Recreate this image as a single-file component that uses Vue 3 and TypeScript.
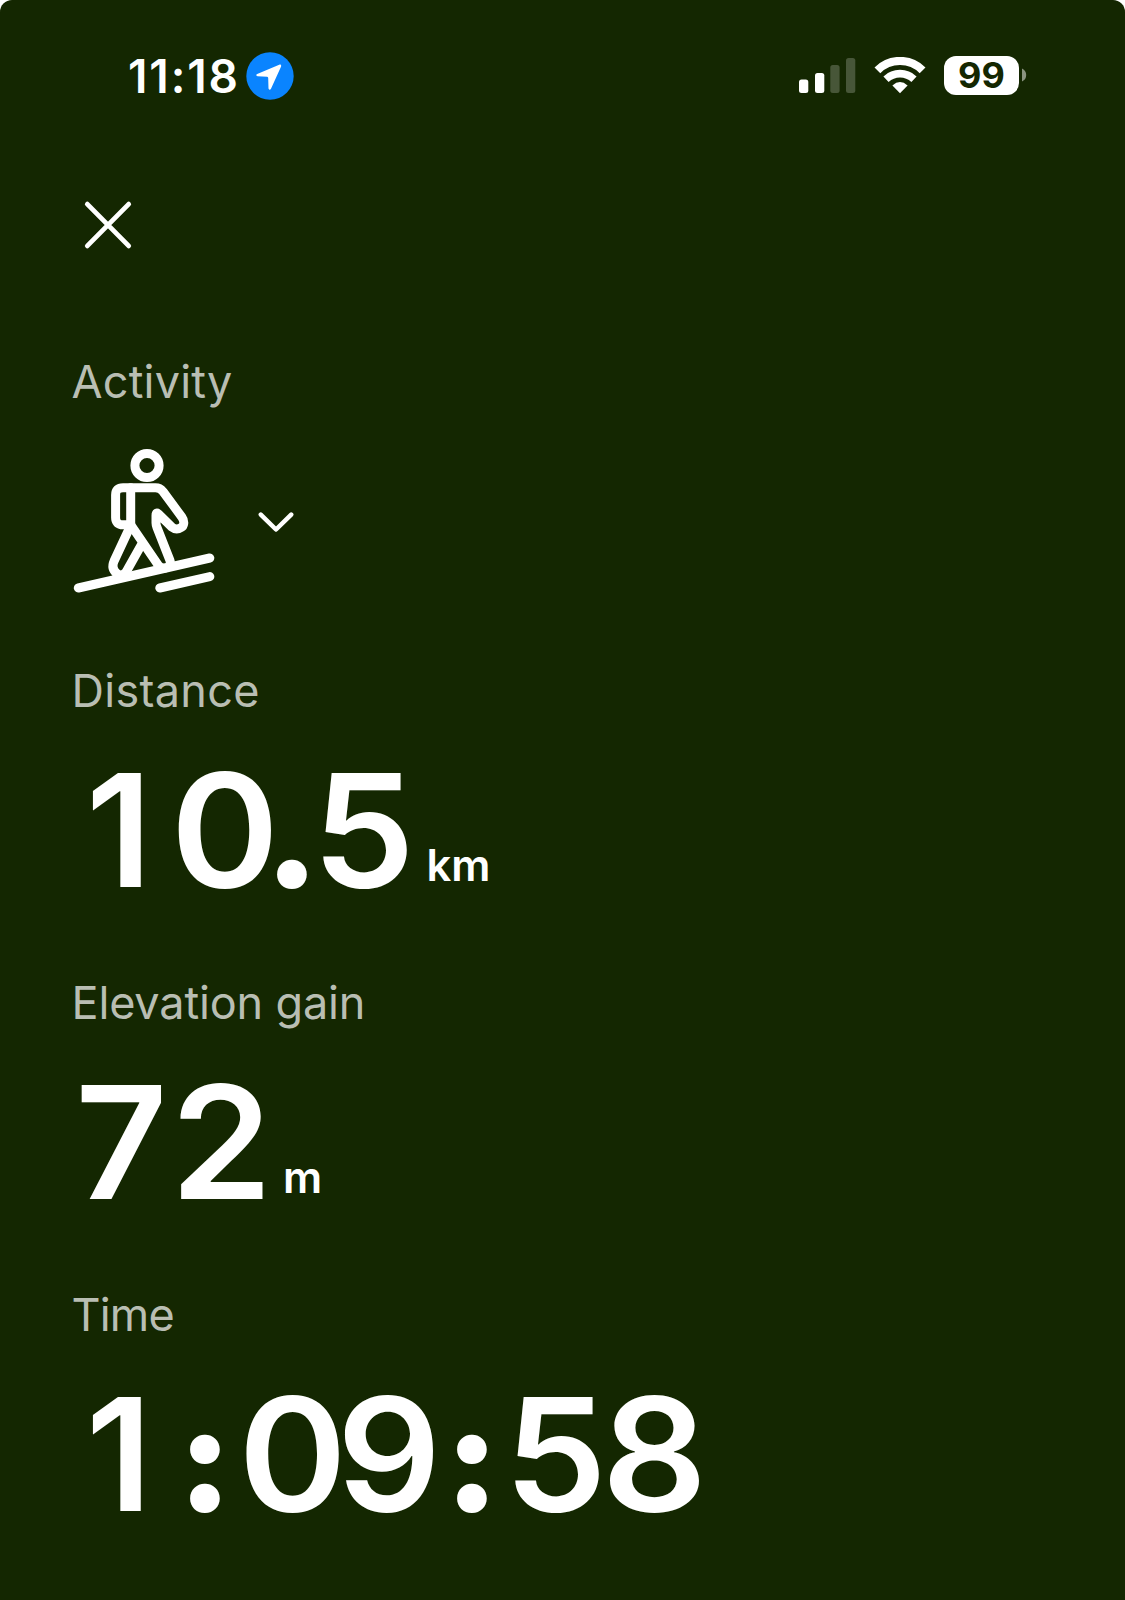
<script setup lang="ts">
interface Glyph {
  ch: string
  width: number
  stretch: number
}
interface Metric {
  key: string
  label: string
  spacing: number
  glyphs: Glyph[]
  unit?: string
}

const g = (ch: string, width: number, stretch = 1): Glyph => ({ ch, width, stretch })

const isMark = (ch: string): boolean => ch === '.' || ch === ':'

const metrics: Metric[] = [
  { key: 'distance', label: 'Distance', spacing: 0.3, unit: 'km', glyphs: [g('1', 92), g('0', 120, 1.05), g('.', 14), g('5', 129, 1.04)] },
  { key: 'elevation', label: 'Elevation gain', spacing: -0.15, unit: 'm', glyphs: [g('7', 97, 1.02), g('2', 103, 1.04)] },
  {
    key: 'time', label: 'Time', spacing: -0.8,
    glyphs: [g('1', 92), g(':', 80), g('0', 95, 1.05), g('9', 98, 1.04), g(':', 68), g('5', 99, 1.04), g('8', 99, 1.05)],
  },
]
</script>

<template>
  <main class="screen">
    <header class="status">
      <div class="clock">
        <span class="time">11:18</span>
        <svg class="location" width="48" height="48" viewBox="0 0 48 48">
          <circle cx="24" cy="24" r="23.7" fill="#0a84ff" />
          <path d="M33.8 12.6 11.2 22.1Q9.2 23.3 11.5 24.2L21.2 24.8Q22.2 25 22.2 26L22.5 36.6Q23.6 39 25 36.8L35.1 14.6Q35.6 12.1 33.8 12.6Z" fill="#fff" />
        </svg>
      </div>
      <div class="indicators">
        <svg width="58" height="36" viewBox="0 0 58 36" fill="#fff">
          <rect x="0" y="21.5" width="9.3" height="13.5" rx="2.5" />
          <rect x="16" y="15" width="9.3" height="20" rx="2.5" />
          <rect x="31.3" y="7" width="9.3" height="28" rx="2.5" opacity=".22" />
          <rect x="47" y="0" width="9.3" height="35" rx="2.5" opacity=".22" />
        </svg>
        <svg class="wifi" width="52" height="38" viewBox="0 0 52 38" fill="none" stroke="#fff">
          <path d="M3.4 13.3A32 32 0 0 1 48.6 13.3" stroke-width="8.2" />
          <path d="M12 22.2A20.5 20.5 0 0 1 40 22.2" stroke-width="7.6" />
          <path d="M26 36.3 18.4 28.4Q26 21.6 33.6 28.4Z" fill="#fff" stroke="none" />
        </svg>
        <span class="battery">99</span>
        <svg class="cap" width="5" height="14" viewBox="0 0 5 14"><path d="M0 .5Q4.2 2.5 4.2 7T0 13.5Z" fill="#fff" opacity=".5" /></svg>
      </div>
    </header>

    <svg class="close" width="50" height="50" viewBox="0 0 50 50" fill="none" stroke="#fff" stroke-width="4.8" stroke-linecap="round">
      <path d="M4.3 4.1 45.7 45.9M45.7 4.1 4.3 45.9" />
    </svg>

    <section class="activity">
      <div class="label activity-label">Activity</div>
      <div class="picker">
        <svg width="144" height="148" viewBox="0 0 144 148" fill="none" stroke="#fff" stroke-width="9" stroke-linecap="round" stroke-linejoin="round">
          <circle cx="74" cy="17.5" r="12.1" />
          <path d="M57.7 39.8H82.5Q87 39.8 90 43.5L108.8 69C112 73.5 111 78 108 79.6C105 81.6 102 81.5 99 79.2L85.5 66Q83 63.6 83 67.5V75Q83 77 84 79.5L97 112.5Q98.5 117.5 94 119.5Q88.5 121.5 85.5 117.5L57.7 76.8" />
          <path d="M57.7 39.8V76.8M57.7 39.8H50Q42.6 39.8 42.6 47V69.5Q42.6 76.8 50 76.8H57.7" />
          <path d="M56.5 80 41.1 113C38.9 118 40 122.5 44 125.6Q50.5 129.5 54.5 121.5L68 97.5" />
          <path d="M5.3 140 136.8 110M86.8 140 136.8 128.6" />
        </svg>
        <svg class="chevron" width="36" height="20" viewBox="0 0 36 20" fill="none" stroke="#fff" stroke-width="4.5" stroke-linecap="round" stroke-linejoin="round">
          <path d="M2.8 2.6 18 17.5 33.2 2.6" />
        </svg>
      </div>
    </section>

    <section v-for="m in metrics" :key="m.key" class="metric">
      <div class="label" :style="{ letterSpacing: m.spacing + 'px' }">{{ m.label }}</div>
      <div class="value">
        <span
          v-for="(c, i) in m.glyphs"
          :key="i"
          class="glyph"
          :class="{ mark: isMark(c.ch) }"
          :style="{ width: c.width + 'px', transform: `scaleX(${c.stretch})` }"
        >{{ c.ch }}</span>
        <span v-if="m.unit" class="unit" :class="m.key">{{ m.unit }}</span>
      </div>
    </section>
  </main>
</template>

<style>
body {
  margin: 0;
  background: #fff;
}
</style>

<style scoped>
.screen {
  box-sizing: border-box;
  width: 1125px;
  height: 1600px;
  padding: 46px 0 0 73px;
  overflow: hidden;
  border-radius: 12px 12px 0 0;
  background: #142701;
  color: #fff;
  font-family: Inter, "Liberation Sans", sans-serif;
}
.status {
  display: flex;
  justify-content: space-between;
  align-items: center;
  height: 60px;
  padding: 0 98px 0 55px;
}
.clock,
.indicators {
  display: flex;
  align-items: center;
}
.time {
  width: 117.5px;
  font-size: 46px;
  font-weight: 600;
  letter-spacing: 1.9px;
  line-height: 61px;
  white-space: nowrap;
}
.wifi {
  margin-left: 17.5px;
}
.battery {
  width: 75px;
  height: 39px;
  margin: -1px 0 0 18px;
  border-radius: 12px;
  background: #fff;
  color: #142701;
  font-size: 36px;
  font-weight: 700;
  line-height: 39px;
  text-align: center;
}
.cap {
  margin: -2px 0 0 3px;
}
.close {
  display: block;
  margin: 94px 0 0 10px;
}
.activity {
  margin-top: 102px;
}
.label {
  height: 60px;
  margin-left: -1.5px;
  color: #b9beb3;
  font-size: 45px;
  font-weight: 400;
  line-height: 60px;
  white-space: nowrap;
}
.activity-label {
  letter-spacing: 0.2px;
}
.picker {
  display: flex;
  align-items: center;
  height: 148px;
  margin-top: 36px;
}
.chevron {
  margin-left: 41px;
}
.metric {
  margin-top: 63px;
}
.activity + .metric {
  margin-top: 65px;
}
.value {
  display: flex;
  align-items: baseline;
  height: 160px;
  margin-top: 29px;
  font-size: 157px;
  font-weight: 560;
  line-height: 160px;
}
.glyph {
  display: flex;
  justify-content: center;
}
.mark {
  font-size: 147px;
  font-weight: 880;
}
.unit {
  align-self: flex-start;
  margin-left: -1.5px;
  padding-top: 84.5px;
  font-size: 43.5px;
  font-weight: 600;
  line-height: 60px;
}
.unit.elevation {
  margin-left: 10px;
}
</style>
